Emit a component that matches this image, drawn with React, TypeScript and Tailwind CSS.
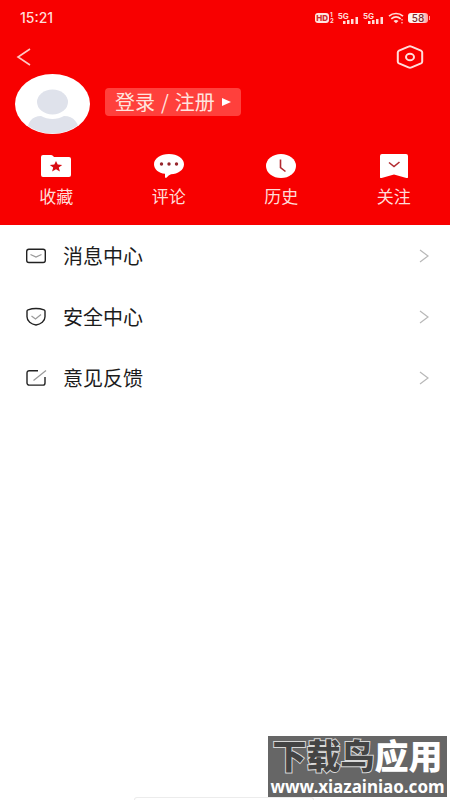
import type { ReactNode } from "react";

interface Shortcut {
    label: string;
    icon: ReactNode;
}

const shortcuts: Shortcut[] = [
    {
        label: "收藏",
        icon: (
            <svg viewBox="0 0 32 24" className="h-6 w-8" aria-hidden="true">
                <path d="M3 1h8q1 0 1.800.8L14 3h15a2 2 0 0 1 2 2v16a2 2 0 0 1-2 2H3a2 2 0 0 1-2-2V3a2 2 0 0 1 2-2z" fill="#fff" />
                <path d="m16 7 1.700 3.600 4.500.4-3.400 2.600 1.100 3.800-3.900-2.100-3.900 2.100 1.100-3.800L9.800 11l4.500-.4z" fill="#d80c12" />
            </svg>
        ),
    },
    {
        label: "评论",
        icon: (
            <svg viewBox="0 0 32 24" className="h-6 w-8" aria-hidden="true">
                <path d="M16 0c8.600 0 15 4.400 15 10.200S24.800 20 18 20.300q-2.500.7-4.300 3.200-1.200 1-1.700-.5v-3.200C5.500 19 1 15.400 1 10.200 1 4.400 7.400 0 16 0z" fill="#fff" />
                <g fill="#96262c">
                    <circle cx="8.500" cy="10" r="1.700" />
                    <circle cx="16" cy="10" r="1.700" />
                    <circle cx="23.500" cy="10" r="1.700" />
                </g>
            </svg>
        ),
    },
    {
        label: "历史",
        icon: (
            <svg viewBox="0 0 32 24" className="h-6 w-8" aria-hidden="true">
                <ellipse cx="16" cy="12" rx="15" ry="12" fill="#fff" />
                <path d="M15.500 5.500v8l5 4" fill="none" stroke="#b22a30" strokeWidth="1.600" />
            </svg>
        ),
    },
    {
        label: "关注",
        icon: (
            <svg viewBox="0 0 32 24" className="h-6 w-8" aria-hidden="true">
                <path d="M4 0h24a2 2 0 0 1 2 2v21q0 1.500-1.600 1L16 20.500 3.600 24Q2 24.500 2 23V2a2 2 0 0 1 2-2z" fill="#fff" />
                <path d="m11 8.500 5 4 5.500-4.500" fill="none" stroke="#b22a30" strokeWidth="1.600" />
            </svg>
        ),
    },
];

const menuItems: Shortcut[] = [
    {
        label: "消息中心",
        icon: (
            <svg viewBox="0 0 22 20" className="h-5 w-[22px]" fill="none" aria-hidden="true">
                <rect x="1.700" y="3.200" width="18.600" height="13.300" rx="2.200" stroke="#222" strokeWidth="1.400" />
                <path d="m5.500 8.500 5.500 2.500 5.500-2.500" stroke="#999" strokeWidth="1.200" />
            </svg>
        ),
    },
    {
        label: "安全中心",
        icon: (
            <svg viewBox="0 0 22 20" className="h-5 w-[22px]" fill="none" aria-hidden="true">
                <path d="M11 1.500c2.800 0 5.600.5 8 1.300q1 .4 1 1.400v5.500c0 4.500-4.200 7.600-9 8.300-4.800-.7-9-3.800-9-8.300V4.200q0-1 1-1.400c2.400-.8 5.200-1.300 8-1.300z" stroke="#222" strokeWidth="1.400" strokeLinejoin="round" />
                <path d="m6.500 9 4 3L16 7.500" stroke="#999" strokeWidth="1.200" />
            </svg>
        ),
    },
    {
        label: "意见反馈",
        icon: (
            <svg viewBox="0 0 22 20" className="h-5 w-[22px]" fill="none" aria-hidden="true">
                <path d="M13 2.700H4.200A2.200 2.200 0 0 0 2 4.900v10a2.200 2.200 0 0 0 2.200 2.200h13.600a2.200 2.200 0 0 0 2.200-2.200V9" stroke="#222" strokeWidth="1.400" />
                <path d="M8.500 12.500 21 2.500" stroke="#999" strokeWidth="1.200" />
            </svg>
        ),
    },
];

function Signal() {
    return (
        <div className="flex h-3 items-end">
            <span className="self-start text-[8px] leading-[8px] font-bold">5G</span>
            <svg viewBox="0 0 16 7" className="-ml-1.5 h-[7px] w-4" fill="#ffdcd8" aria-hidden="true">
                <rect x="0" y="4" width="2.500" height="3" />
                <rect x="4" y="3" width="2.500" height="4" />
                <rect x="8" y="2" width="2.500" height="5" />
                <rect x="12.500" y="0" width="2.500" height="7" />
            </svg>
        </div>
    );
}

function StatusBar() {
    return (
        <div className="flex h-9 items-center justify-between px-5 font-['Inter','Noto_Sans_CJK_SC',sans-serif] text-[#ffdcd8]">
            <span className="text-sm font-medium">15:21</span>
            <div className="flex items-center gap-1">
                <div className="flex items-center gap-px">
                    <span className="rounded-[3px] bg-[#ffe4e0] px-px text-[8px] leading-[10px] font-extrabold text-[#d0282c]">HD</span>
                    <span className="flex flex-col text-[6px] leading-[6px] font-bold">
                        <span>1</span>
                        <span>2</span>
                    </span>
                </div>
                <Signal />
                <Signal />
                <svg viewBox="0 0 16 12" className="h-3 w-4" fill="none" stroke="#ffdcd8" strokeWidth="1.700" aria-hidden="true">
                    <path d="M1 4.200c4-3.600 10-3.600 14 0M3.300 6.800c2.800-2.400 6.600-2.400 9.400 0" />
                    <path d="M5.500 9c1.500-1.200 3.500-1.200 5 0L8 11.200z" fill="#ffdcd8" stroke="none" />
                    <path d="M14 7v1.500M14 10v1.500" strokeWidth="1.200" />
                </svg>
                <div className="flex items-center gap-px">
                    <span className="w-5 rounded-[3px] bg-linear-to-r from-[#fff0ee] from-60% to-[#ff9c98] text-center text-[10px] leading-[10px] font-medium text-[#7c2a2c]">58</span>
                    <span className="h-1 w-px bg-[#ff9c98]" />
                </div>
            </div>
        </div>
    );
}

export default function App() {
    return (
        <div className="flex min-h-screen flex-col bg-white font-['Noto_Sans_CJK_SC','Noto_Sans',sans-serif]">
            <header className="bg-[#f80000] pb-[17px] text-white">
                <StatusBar />

                <div className="flex h-[38px] items-center justify-between px-4 pt-1">
                    <button type="button" aria-label="返回" className="flex h-6 w-4 items-center">
                        <svg viewBox="0 0 16 20" className="h-5 w-4" fill="none" stroke="#ffc8c4" strokeWidth="1.600" aria-hidden="true">
                            <path d="M14 2 2 10l12 8" />
                        </svg>
                    </button>
                    <button type="button" aria-label="设置" className="mr-2 flex h-6 w-8 items-center">
                        <svg viewBox="0 0 32 24" className="h-6 w-8" fill="none" stroke="#ffdedb" strokeWidth="2" strokeLinejoin="round" aria-hidden="true">
                            <path d="M14.500 1.600q1.500-.7 3 0l9.500 4q1.200.6 1.200 2v8.800q0 1.400-1.200 2l-9.500 4q-1.500.7-3 0l-9.500-4q-1.200-.6-1.200-2V7.600q0-1.400 1.200-2z" />
                            <ellipse cx="16" cy="12" rx="4" ry="3.300" />
                        </svg>
                    </button>
                </div>

                <div className="flex items-center gap-[15px] px-[15px]">
                    <svg viewBox="0 0 75 60" className="h-[60px] w-[75px]" aria-hidden="true">
                        <defs>
                            <clipPath id="avatar">
                                <ellipse cx="37.500" cy="30" rx="37" ry="29.500" />
                            </clipPath>
                        </defs>
                        <ellipse cx="37.500" cy="30" rx="37.500" ry="30" fill="#fff" />
                        <g clipPath="url(#avatar)" fill="#dfe2eb">
                            <path d="M12 60c0-12 5-18 14-18 7 4 16 4 23 0 10 0 15 7 16 18z" />
                            <ellipse cx="37.500" cy="28" rx="17.500" ry="14" fill="#fff" />
                            <ellipse cx="37.500" cy="28" rx="15.500" ry="12.500" />
                        </g>
                    </svg>
                    <button type="button" className="mb-1 flex h-7 items-center gap-1.5 rounded-[4px] bg-[#ff403c] px-[10px] text-xl text-[#ffe4df]">
                        <span>登录</span>
                        <span>/</span>
                        <span>注册</span>
                        <svg viewBox="0 0 10 8" className="h-2 w-[10px]" fill="#fff" aria-hidden="true">
                            <path d="m1 0 9 4-9 4z" />
                        </svg>
                    </button>
                </div>

                <nav className="mt-5 grid grid-cols-4">
                    {shortcuts.map((item) => (
                        <button key={item.label} type="button" className="flex flex-col items-center gap-1.5">
                            {item.icon}
                            <span className="text-[17px] leading-6 text-[#ffdcd8]">{item.label}</span>
                        </button>
                    ))}
                </nav>
            </header>

            <main className="flex-1">
                {menuItems.map((item) => (
                    <button key={item.label} type="button" className="flex h-[61px] w-full items-center pr-5 pl-[25px] text-left">
                        {item.icon}
                        <span className="ml-4 flex-1 text-xl text-[#1c1c1c]">{item.label}</span>
                        <svg viewBox="0 0 12 16" className="h-4 w-3" fill="none" stroke="#b8b8b8" strokeWidth="1.200" aria-hidden="true">
                            <path d="m2 2 8 6-8 6" />
                        </svg>
                    </button>
                ))}
            </main>

            <footer className="flex flex-col items-end pr-[3px]">
                <div className="flex h-[61px] w-[179px] flex-col items-center justify-end bg-[#666] whitespace-nowrap">
                    <div className="font-['Liberation_Sans','Noto_Sans_CJK_SC',sans-serif] text-[34px] leading-10 font-black">
                        <span className="text-[#444] [-webkit-text-stroke:2px_#d8d8d8] [paint-order:stroke_fill]">下载鸟</span>
                        <span className="text-white">应用</span>
                    </div>
                    <a href="#" className="font-['Noto_Sans',sans-serif] text-[17px] leading-5 font-bold text-white">www.xiazainiao.com</a>
                </div>
                {/* Home indicator */}
                <div className="mx-auto h-[3px] w-[180px] rounded-t-sm border border-b-0 border-[#ececec]" />
            </footer>
        </div>
    );
}
